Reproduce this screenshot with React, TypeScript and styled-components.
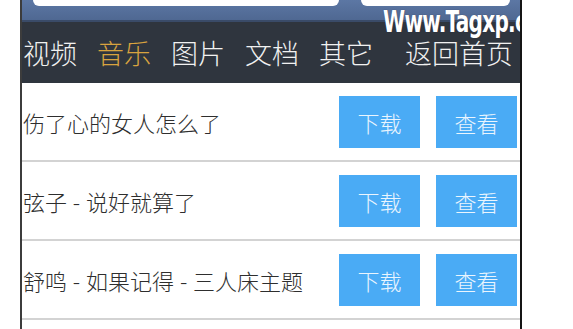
import styled, { createGlobalStyle } from "styled-components";

const GlobalStyle = createGlobalStyle`
  html, body {
    margin: 0;
    padding: 0;
    background: #fff;
    font-family: "Noto Sans CJK SC", "Noto Sans", sans-serif;
  }
`;

const Page = styled.div`
  padding-left: 20px;
  width: 502px;
`;

const Phone = styled.div`
  position: relative;
  min-height: 329px;
  border-left: 2px solid #3c3c3c;
  border-right: 2px solid #151515;
  background: #fff;
  overflow: hidden;
`;

const TopBar = styled.div`
  display: flex;
  align-items: flex-start;
  gap: 22px;
  height: 20px;
  padding: 0 10px 0 11px;
  background: linear-gradient(#5c77a4, #4f6892);
  border-bottom: 2px solid #3a4b68;
`;

const SearchBox = styled.div`
  width: 306px;
  height: 6px;
  background: #fff;
  border-radius: 0 0 7px 7px;
`;

const SearchButton = styled.div`
  flex: 1;
  height: 6px;
  background: #fff;
  border-radius: 0 0 10px 10px;
`;

// watermark stamped over the top bar, clipped by the phone frame
const Watermark = styled.div`
  position: absolute;
  top: 6px;
  left: 361px;
  color: #fff;
  font-family: "DejaVu Sans Condensed", "DejaVu Sans", sans-serif;
  font-weight: bold;
  font-size: 31px;
  line-height: 1;
  letter-spacing: -1px;
  transform: scaleX(0.72);
  transform-origin: left top;
  white-space: nowrap;
  text-shadow: 0 0 1px #334;
`;

const Nav = styled.nav`
  display: flex;
  align-items: center;
  gap: 20px;
  height: 61px;
  padding: 0 7px 0 1px;
  background: #2f353e;
`;

const NavItem = styled.span<{ $active?: boolean; $end?: boolean }>`
  font-size: 27px;
  font-weight: 300;
  line-height: 1;
  color: ${(p) => (p.$active ? "#d8a33f" : "#f1f1f1")};
  margin-left: ${(p) => (p.$end ? "auto" : "0")};
`;

const Row = styled.div`
  display: flex;
  align-items: center;
  height: 77px;
  padding: 0 3px 0 1px;
  border-bottom: 2px solid #d3d3d3;
`;

const Title = styled.div`
  flex: 1;
  font-size: 22px;
  font-weight: 300;
  color: #2e2e2e;
  white-space: nowrap;
  word-spacing: 1px;
`;

const Actions = styled.div`
  display: flex;
  gap: 16px;
`;

const ActionButton = styled.button`
  width: 81px;
  height: 52px;
  border: none;
  background: #4aabf5;
  color: #eaf5fe;
  font-family: "Noto Sans CJK SC", sans-serif;
  font-size: 22px;
  font-weight: 300;
  padding: 0;
`;

const navItems = ["视频", "音乐", "图片", "文档", "其它"];

const songs = [
  "伤了心的女人怎么了",
  "弦子 - 说好就算了",
  "舒鸣 - 如果记得 - 三人床主题",
];

export default function App() {
  return (
    <Page>
      <GlobalStyle />
      <Phone>
        <TopBar>
          <SearchBox />
          <SearchButton />
        </TopBar>
        <Nav>
          {navItems.map((item) => (
            <NavItem key={item} $active={item === "音乐"}>
              {item}
            </NavItem>
          ))}
          <NavItem $end>返回首页</NavItem>
        </Nav>
        {songs.map((song) => (
          <Row key={song}>
            <Title>{song}</Title>
            <Actions>
              <ActionButton>下载</ActionButton>
              <ActionButton>查看</ActionButton>
            </Actions>
          </Row>
        ))}
        <Watermark>Www.Tagxp.com</Watermark>
      </Phone>
    </Page>
  );
}
